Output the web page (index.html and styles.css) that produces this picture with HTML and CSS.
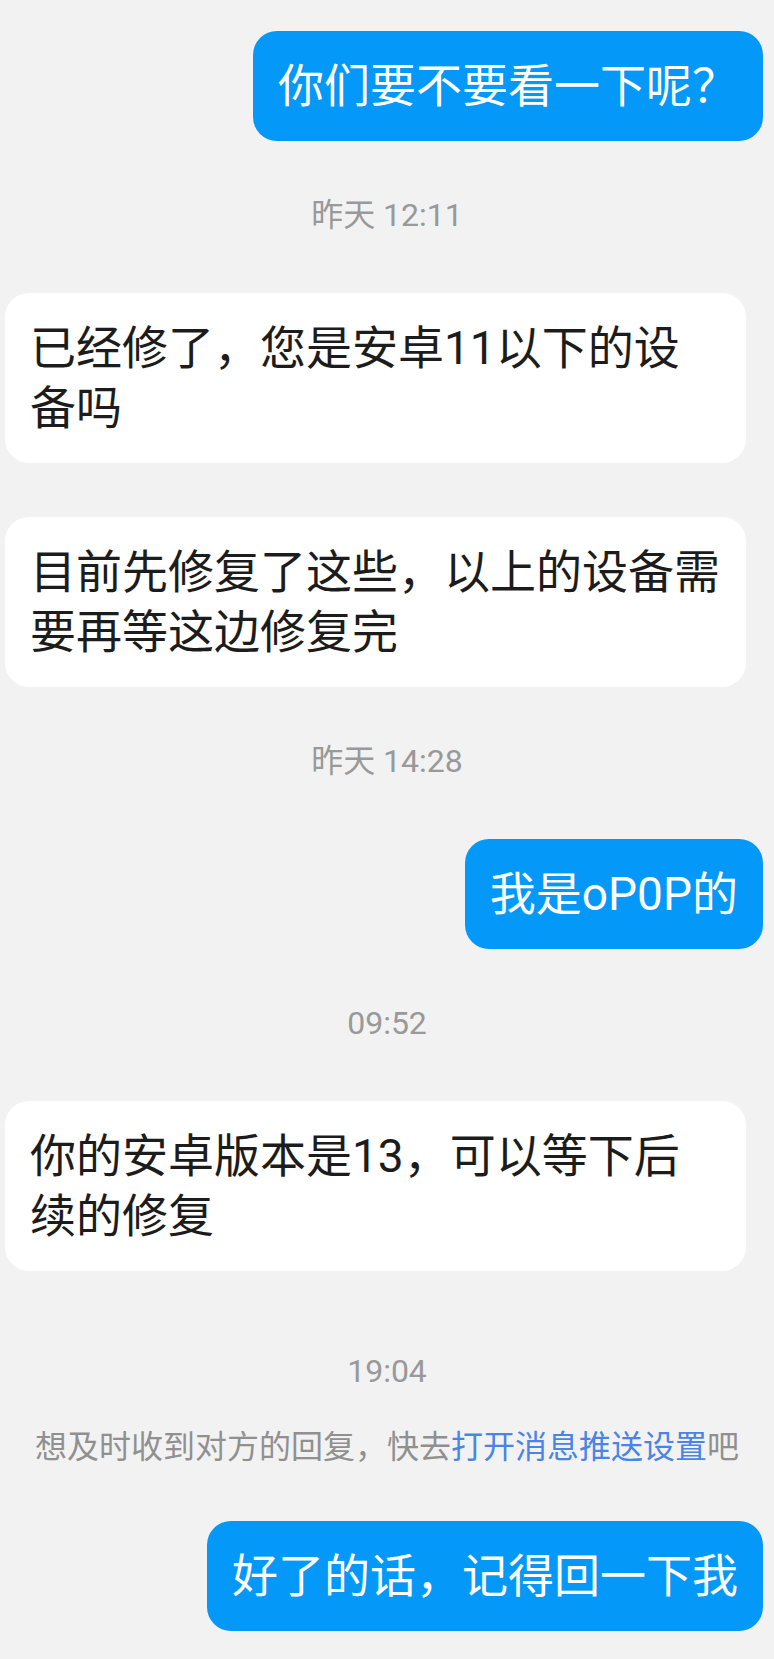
FILE: index.html
```html
<!DOCTYPE html>
<html lang="zh-CN">
<head>
<meta charset="utf-8">
<title>Chat</title>
<link rel="stylesheet" href="styles.css">
</head>
<body>
<main class="chat">
  <div class="bubble bubble-out">你们要不要看一下呢？</div>
  <div class="ts">昨天 12:11</div>
  <div class="bubble bubble-in">已经修了，您是安卓11以下的设备吗</div>
  <div class="bubble bubble-in">目前先修复了这些，以上的设备需要再等这边修复完</div>
  <div class="ts">昨天 14:28</div>
  <div class="bubble bubble-out">我是oP0P的</div>
  <div class="ts">09:52</div>
  <div class="bubble bubble-in">你的安卓版本是13，可以等下后续的修复</div>
  <div class="ts ts-late">19:04</div>
  <div class="notice">想及时收到对方的回复，快去<span class="link">打开消息推送设置</span>吧</div>
  <div class="bubble bubble-out">好了的话，记得回一下我</div>
</main>
</body>
</html>
```

FILE: styles.css
```css
html, body {
  margin: 0;
  padding: 0;
  background: #f2f2f2;
}

body {
  font-family: Roboto, "Noto Sans CJK SC", sans-serif;
}

.chat {
  display: flex;
  flex-direction: column;
  padding: 31px 0 30px;
}

.bubble {
  box-sizing: border-box;
  max-width: 741px;
  padding: 25px 25px;
  border-radius: 24px;
  font-size: 46px;
  line-height: 60px;
  margin-top: 54px;
  word-break: break-all;
}

.bubble:first-child {
  margin-top: 0;
}

.bubble-out {
  align-self: flex-end;
  margin-right: 11px;
  background: #0499f8;
  color: #ffffff;
}

.bubble-in {
  align-self: flex-start;
  margin-left: 5px;
  background: #ffffff;
  color: #1c1c1c;
}

.ts {
  margin-top: 54px;
  margin-bottom: 4px;
  text-align: center;
  font-size: 32px;
  line-height: 40px;
  color: #999999;
}

.ts-late {
  margin-top: 80px;
}

.notice {
  margin-top: 32px;
  text-align: center;
  font-size: 32px;
  line-height: 40px;
  color: #909090;
  white-space: nowrap;
}

.notice + .bubble {
  margin-top: 54px;
}

.link {
  color: #4a84e6;
}
```
